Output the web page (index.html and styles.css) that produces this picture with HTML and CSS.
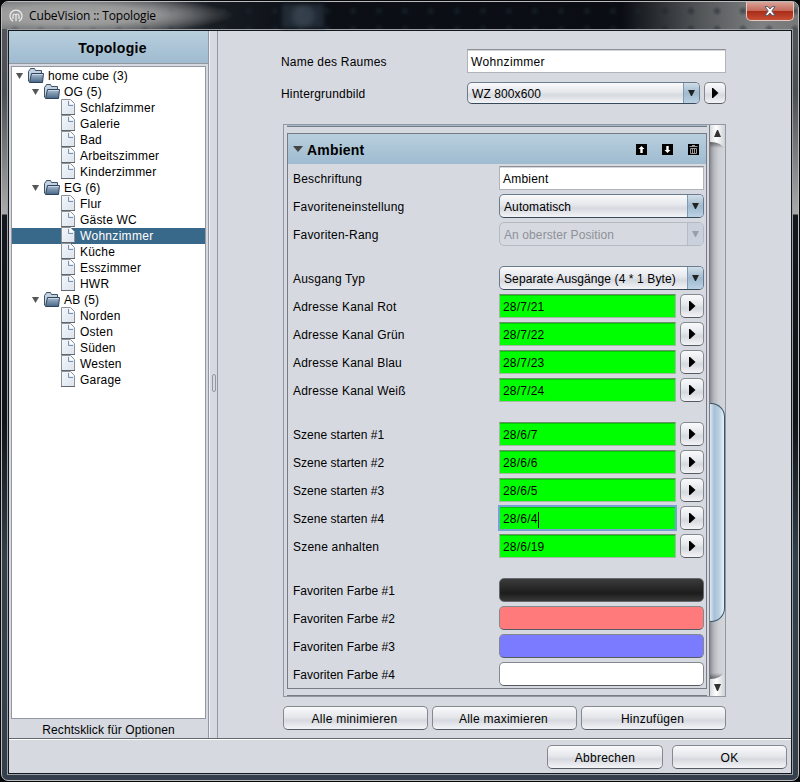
FILE: index.html
```html
<!DOCTYPE html>
<html lang="de">
<head>
<meta charset="utf-8">
<title>CubeVision :: Topologie</title>
<link rel="stylesheet" href="styles.css">
</head>
<body>
<svg class="defs" width="0" height="0">
  <defs>
    <linearGradient id="fg" x1="0" y1="0" x2="0" y2="1"><stop offset="0" stop-color="#a9bed3"/><stop offset="1" stop-color="#476585"/></linearGradient>
    <linearGradient id="pg" x1="0" y1="0" x2="1" y2="1"><stop offset="0" stop-color="#f4f7fb"/><stop offset="1" stop-color="#dbe4ee"/></linearGradient>
    <linearGradient id="sg" x1="0" y1="0" x2="1" y2="0"><stop offset="0" stop-color="#d8dade"/><stop offset=".4" stop-color="#fff"/><stop offset="1" stop-color="#cfd2d6"/></linearGradient>
    <symbol id="folder" viewBox="0 0 16 16">
      <path d="M.5 13.500V3.500Q.5 2.500 1.500 2.500L2.500 .5H6.500L7.500 2.500H13.500V5" fill="#c3d0df" stroke="#3c5269"/>
      <path d="M3.500 5.500H15.500L14.500 14.500H1.500Z" fill="url(#fg)" stroke="#2d4359"/>
      <path d="M4 6.500H15" stroke="#c7d6e5"/>
    </symbol>
    <symbol id="page" viewBox="0 0 14 16">
      <path d="M.5 .5H9.500L13.500 4.500V15.500H.5Z" fill="url(#pg)" stroke="#8d9299"/>
      <path d="M0 15.500H14" stroke="#62666b"/>
      <path d="M7.500 2V6.500H12" fill="none" stroke="#7891ad"/>
      <path d="M9 1L13 5H9Z" fill="#fff"/>
    </symbol>
    <symbol id="play" viewBox="0 0 7 10"><path d="M0 0H1L6.500 5L1 10H0Z"/></symbol>
    <symbol id="down" viewBox="0 0 8 7"><path d="M0 0H8L4.500 7H3.500Z"/></symbol>
  </defs>
</svg>
<div class="window">
  <header class="titlebar">
    <svg class="logo" width="14" height="14" viewBox="0 0 14 14" fill="none" stroke="#eee" stroke-width="1.200"><path d="M4 12.300A6 6 0 1 1 10 12.300"/><path d="M4 10V7Q4 5 5.500 5Q7 5 7 7V12M7 7Q7 5 8.500 5Q10 5 10 7V10"/></svg>
    <span class="caption">CubeVision :: Topologie</span>
    <span class="ghost"></span>
    <span class="close"><svg width="12" height="10" viewBox="0 0 12 10"><path d="M1 .7H4L6 3L8 .7H11L7.800 5L11 9.300H8L6 7L4 9.300H1L4.200 5Z" fill="#fff" stroke="#565a6c"/></svg></span>
  </header>
  <div class="client">
    <div class="main">
      <aside class="side">
        <h1 class="side-title">Topologie</h1>
        <ul class="tree" id="tree"></ul>
        <p class="hint">Rechtsklick für Optionen</p>
      </aside>
      <div class="splitter"><span class="grip"></span></div>
      <section class="content">
        <div class="room"><label>Name des Raumes</label><span class="input">Wohnzimmer</span></div>
        <div class="room"><label>Hintergrundbild</label><span class="combo"><span>WZ 800x600</span><i><svg width="7" height="6"><use href="#down"/></svg></i></span><span class="go"><svg width="7" height="10"><use href="#play"/></svg></span></div>
        <div class="scrollpane">
          <div class="viewport">
            <div class="card-end"></div>
            <div class="card">
              <div class="card-head">
                <svg width="10" height="6" viewBox="0 0 10 6"><path d="M0 0H10L5 6Z" fill="#444"/></svg>
                <h2>Ambient</h2>
                <svg class="tool" width="11" height="11" viewBox="0 0 11 11"><path d="M0 0H11V11H0Z"/><path d="M5.500 2L8.500 5H6.700V9H4.300V5H2.500Z" fill="#fff"/></svg>
                <svg class="tool" width="11" height="11" viewBox="0 0 11 11"><path d="M0 0H11V11H0Z"/><path d="M5.500 9L8.500 6H6.700V2H4.300V6H2.500Z" fill="#fff"/></svg>
                <svg class="tool" width="11" height="11" viewBox="0 0 11 11"><path d="M0 0H11V11H0Z"/><path d="M1.500 2.500H9.500M4 1.500H7M2.500 4.500V9.500H8.500V4.500ZM4.500 4.500V9M6.500 4.500V9" fill="none" stroke="#999"/></svg>
              </div>
              <div class="rows" id="rows"></div>
            </div>
            <div class="card-start"></div>
          </div>
          <div class="scrollbar">
            <svg class="up" width="15" height="25"><path d="M0 0H15V25Q12 17 0 17Z" fill="url(#sg)"/><path d="M4 12H11L8 5H7Z" fill="#333"/></svg>
            <span class="track"><span class="thumb"></span></span>
            <svg class="dn" width="15" height="25"><path d="M0 8Q11 8 15 0V25H0Z" fill="url(#sg)"/><path d="M4 13H11L8 20H7Z" fill="#333"/></svg>
          </div>
        </div>
        <div class="actions"><button>Alle minimieren</button><button>Alle maximieren</button><button>Hinzufügen</button></div>
      </section>
    </div>
    <footer class="footer"><button>Abbrechen</button><button>OK</button></footer>
  </div>
</div>
<script src="app.js"></script>
</body>
</html>
```
FILE: styles.css
```css
* { box-sizing: border-box; }
body { margin: 0; width: 800px; height: 782px; overflow: hidden; background: #08090b; font: 12px/16px "Liberation Sans", Arial, sans-serif; letter-spacing: .2px; color: #000; }
.defs { position: absolute; }
svg { display: block; flex: none; }
.window { width: 798px; height: 780px; margin: 1px; border: 1px solid #b9bbbd; border-radius: 7px; padding: 0 5px 5px; background: linear-gradient(#55585c 0, #4b4e52 90px, #aaa 212px, #14181e 213px, #111419 420px, #33404c 560px, #343f4b); }
.titlebar { height: 27px; display: flex; align-items: center; margin: 0 -5px; padding-left: 7px; border-radius: 6px 6px 0 0; background: radial-gradient(ellipse 160px 19px at 72px 13px, #a8a8a8 0, #a0a0a0e0 50%, #8880 100%), radial-gradient(circle at 50% 50%, #1c262f90, #0000 5px) 0 0/26px 18px, linear-gradient(90deg, #707273, #494c50 150px, #181d23 210px, #0c1016 300px, #0a0e14 620px, #54575a 700px, #7e8081 760px, #777); position: relative; }
.caption { font: 12px/18px "Open Sans", "Noto Sans", sans-serif; letter-spacing: -.13px; margin-left: 6px; }
.ghost { position: absolute; left: 280px; top: 2px; width: 42px; height: 24px; background: radial-gradient(circle 14px, #3e4b58 60%, #26303b); filter: blur(2px); opacity: .8; }
.close { position: absolute; right: 4px; top: 0; width: 48px; height: 19px; border: 1px solid #e4c9c4; border-top: 0; border-radius: 0 0 5px 5px; display: flex; align-items: center; justify-content: center; background: linear-gradient(#d9a499, #c46a5a 48%, #a82c18 52%, #c84e33); }
.client { height: 746px; border: 1px solid #9aa0a3; background: #d6d9e0; box-shadow: inset 0 0 0 1px #14171b; padding: 1px; display: flex; flex-direction: column; }
.main { flex: 1; display: flex; min-height: 0; }
.side { width: 200px; border-right: 1px solid #9297a1; display: flex; flex-direction: column; }
.side-title { margin: 0; height: 33px; font: bold 14px/35px "Liberation Sans", Arial, sans-serif; letter-spacing: .3px; text-align: center; padding-left: 8px; background: linear-gradient(#b8cfdd, #9fbbd0); border-bottom: 1px solid #9297a1; }
.tree { list-style: none; margin: 2px 2px 0 2px; padding: 1px 0 0; height: 653px; border: 1px solid #9297a1; background: #fff; }
.tree li { height: 16px; display: flex; align-items: center; }
.tree .arrow { width: 7px; height: 6px; margin: 0 5px 0 4px; clip-path: polygon(0 0, 100% 0, 50% 100%); background: #555; }
.tree .l1 { padding-left: 16px; }
.tree .l2 { padding-left: 49px; }
.tree svg { margin-right: 4px; }
.tree .l2 svg { margin: -2px 5px 0 0; }
.tree .sel { background: #39698a; color: #fff; letter-spacing: .3px; }
.hint { margin: 3px 0 0; text-align: center; letter-spacing: .1px; }
.splitter { width: 9px; border-right: 1px solid #9297a1; border-left: 1px solid #eef0f4; display: flex; align-items: center; justify-content: center; }
.grip { width: 4px; height: 18px; margin-bottom: 4px; border: 1px solid #9297a1; border-radius: 2px; }
.content { flex: 1; padding: 17px 0 0 63px; }
.room { width: 445px; height: 26px; margin-bottom: 6px; display: flex; align-items: center; }
.room label { width: 186px; padding-top: 2px; }
.room .combo, .room .go { height: 22px; line-height: 22px; }
.room .go { width: 22px; }
.room .input { letter-spacing: .35px; }
.input { flex: 1; height: 24px; line-height: 24px; padding: 0 3px; background: #fff; border: 1px solid #b0b3b8; border-top-color: #8c8f94; box-shadow: inset 0 1px #d4d6da; }
.combo, .go, button { border: 1px solid #84888f; border-bottom-color: #565a61; border-radius: 5px; background: linear-gradient(#fafafc, #e5e7eb 45%, #d6d9df 60%, #f3f4f7); }
.combo { flex: 1; height: 24px; display: flex; line-height: 24px; padding-left: 4px; overflow: hidden; border-color: #6a7b8d; border-bottom-color: #38495a; }
.combo span { flex: 1; white-space: nowrap; letter-spacing: .1px; }
.combo i { width: 16px; display: flex; align-items: center; justify-content: center; border-left: 1px solid #7c9ab2; background: linear-gradient(#d1dee8, #9eb9cd 50%, #bcd1e4); fill: #222; }
.go { width: 24px; height: 24px; margin-left: 4px; display: flex; align-items: center; justify-content: center; }
.scrollpane { width: 443px; height: 573px; margin: 18px 0 0 2px; border: 1px solid #9297a1; display: flex; }
.viewport { width: 423px; padding-left: 3px; display: flex; flex-direction: column; }
.card-end { height: 2px; border-top: 1px solid #9fbbd0; border-bottom: 1px solid #777b83; }
.card { margin-top: 6px; height: 556px; border: 1px solid #777b83; }
.card-head { height: 30px; display: flex; align-items: center; padding: 0 7px 0 5px; background: linear-gradient(#b8cfdd, #9fbbd0); }
.card-head h2 { flex: 1; margin: 2px 0 0 4px; font: bold 14px/18px "Liberation Sans", Arial, sans-serif; letter-spacing: .2px; }
.tool + .tool { margin-left: 15px; }
.card-start { margin-top: auto; border-top: 1px solid #777b83; }
.rows { padding: 2px 2px 0 5px; }
.row { height: 24px; margin-bottom: 4px; display: flex; align-items: center; }
.row.gap { margin-top: 20px; }
.row label { width: 206px; padding-top: 2px; }
.row label.tight { letter-spacing: .03px; }
.disabled { color: #8e9199; border-color: #b5b9c1; border-bottom-color: #b5b9c1; background: #d6d9e0; }
.disabled i { border-color: #b3bdc9; background: #c9d2dc; fill: #999fa8; }
.green { background: #0f0; border-color: #a6b8a6; border-top-color: #6f8f6f; box-shadow: inset 0 1px #0c0; }
.focus { outline: 2px solid #73a4d1; outline-offset: -1px; }
.focus::after { content: ""; display: inline-block; width: 1px; height: 16px; background: #000; vertical-align: middle; }
.swatch { flex: 1; height: 24px; border: 1px solid #84888f; border-bottom-color: #565a61; border-radius: 5px; }
.c1 { background: linear-gradient(#3b3b3b, #1d1d1d 65%, #383838); border-color: #65686c; }
.c2 { background: #ff7b7b; }
.c3 { background: #7b7bff; }
.c4 { background: #fff; }
.scrollbar { width: 15px; margin-left: auto; display: flex; flex-direction: column; box-shadow: -1px 0 #777b83; }
.up, .dn { position: relative; z-index: 1; }
.up { margin-bottom: -8px; }
.dn { margin-top: -8px; }
.track { flex: 1; padding-top: 261px; background: linear-gradient(#3339, #3330 6px, #3330 calc(100% - 6px), #3339), linear-gradient(90deg, #888b91, #b5b7bd 25%, #cdd0d5 60%, #d3d5da); }
.thumb { display: block; height: 219px; border: 1px solid #38536b; border-left: 0; border-radius: 0 14px 14px 0; background: linear-gradient(90deg, #dce9f3, #a8c0d6 30%, #b9d0e2 65%, #e6f4fb); }
.actions { display: flex; gap: 4px; margin: 9px 0 0 2px; width: 443px; }
button { flex: 1; height: 24px; padding: 1px 0 0; font: inherit; letter-spacing: .25px; color: inherit; }
.actions button { padding-right: 2px; flex-basis: 0; }
.footer { height: 35px; border-top: 1px solid #646870; box-shadow: inset 0 1px #fff; display: flex; justify-content: flex-end; gap: 9px; padding: 6px 4px 0; }
.footer button { flex: none; width: 116px; }
.footer button:last-child { width: 115px; }
```
FILE: app.js
```js
const tree = [[0,'home cube (3)'],[1,'OG (5)'],[2,'Schlafzimmer'],[2,'Galerie'],[2,'Bad'],[2,'Arbeitszimmer'],[2,'Kinderzimmer'],[1,'EG (6)'],[2,'Flur'],[2,'Gäste WC'],[2,'Wohnzimmer'],[2,'Küche'],[2,'Esszimmer'],[2,'HWR'],[1,'AB (5)'],[2,'Norden'],[2,'Osten'],[2,'Süden'],[2,'Westen'],[2,'Garage']];
document.getElementById('tree').innerHTML = tree.map(([l, t]) =>
  `<li class="l${l}${t === 'Wohnzimmer' ? ' sel' : ''}">${l < 2
    ? '<span class="arrow"></span><svg width="16" height="16"><use href="#folder"/></svg>'
    : '<svg width="14" height="16"><use href="#page"/></svg>'}${t}</li>`).join('');

const combo = (t, c = '') => `<span class="combo ${c}"><span>${t}</span><i><svg width="7" height="6"><use href="#down"/></svg></i></span>`;
const addr = (t, c = '') => `<span class="input green ${c}">${t}</span><span class="go"><svg width="7" height="10"><use href="#play"/></svg></span>`;
const color = n => `<span class="swatch c${n}"></span>`;
const rows = [
  ['Beschriftung', '<span class="input">Ambient</span>'],
  ['Favoriteneinstellung', combo('Automatisch')],
  ['Favoriten-Rang', combo('An oberster Position', 'disabled')],
  ['Ausgang Typ', combo('Separate Ausgänge (4 * 1 Byte)'), 1],
  ['Adresse Kanal Rot', addr('28/7/21')],
  ['Adresse Kanal Grün', addr('28/7/22')],
  ['Adresse Kanal Blau', addr('28/7/23')],
  ['Adresse Kanal Weiß', addr('28/7/24')],
  ['Szene starten #1', addr('28/6/7'), 1],
  ['Szene starten #2', addr('28/6/6')],
  ['Szene starten #3', addr('28/6/5')],
  ['Szene starten #4', addr('28/6/4', 'focus')],
  ['Szene anhalten', addr('28/6/19')],
  ['Favoriten Farbe #1', color(1), 1],
  ['Favoriten Farbe #2', color(2)],
  ['Favoriten Farbe #3', color(3)],
  ['Favoriten Farbe #4', color(4)]
];
document.getElementById('rows').innerHTML = rows.map(([l, c, g]) =>
  `<div class="row${g ? ' gap' : ''}"><label${l.includes('#') ? ' class="tight"' : ''}>${l}</label>${c}</div>`).join('');
```
